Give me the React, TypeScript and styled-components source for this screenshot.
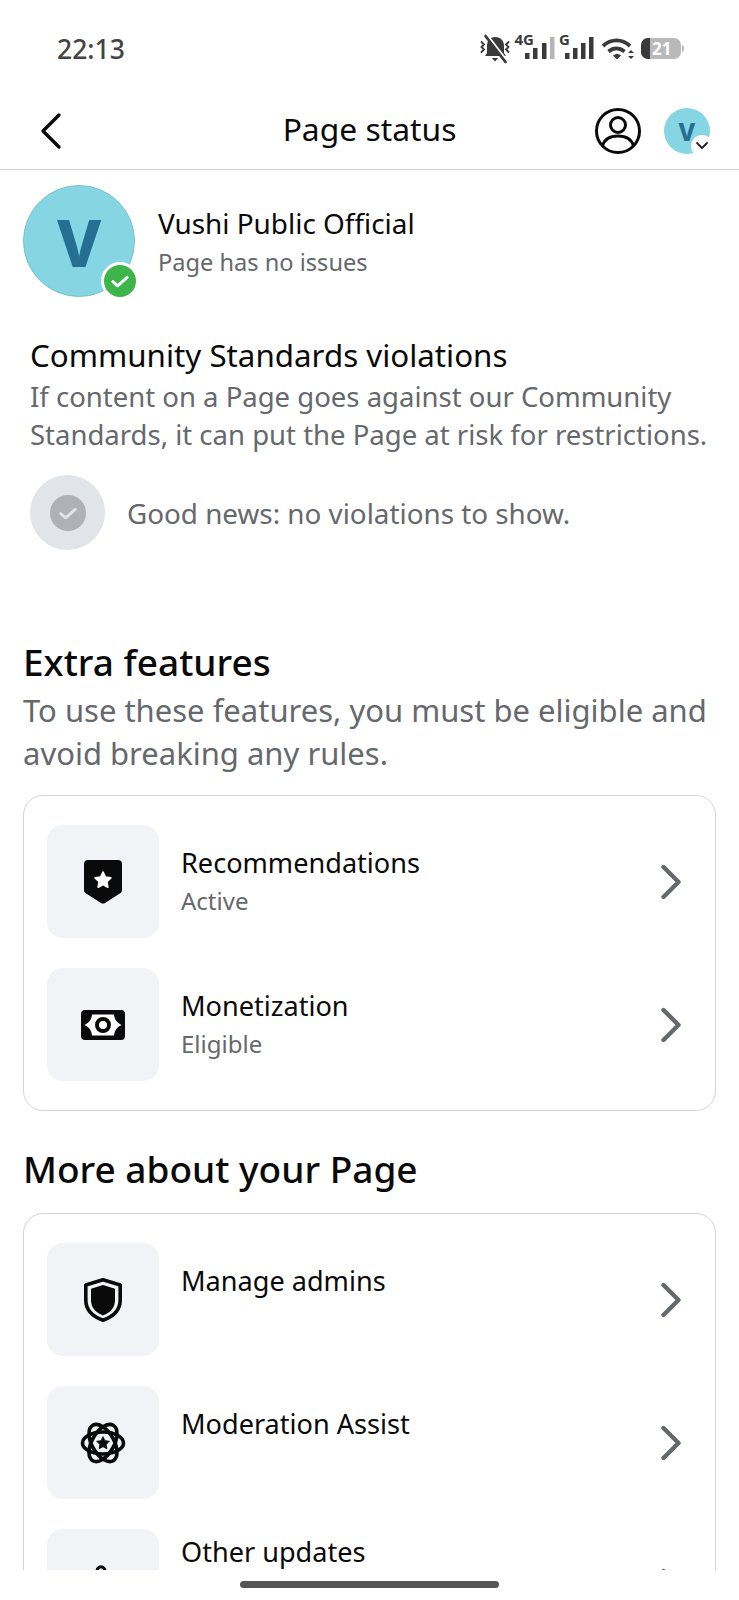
import React from "react";
import styled, { createGlobalStyle } from "styled-components";

const GlobalStyle = createGlobalStyle`
  html, body {
    margin: 0;
    padding: 0;
    background: #fff;
  }
  * {
    box-sizing: border-box;
  }
`;

const Page = styled.div`
  width: 739px;
  height: 1600px;
  display: flex;
  flex-direction: column;
  overflow: hidden;
  background: #fff;
  font-family: "Noto Sans", sans-serif;
  color: #0a0a0a;
`;

// ---------------------------------------------
// Status bar
// ---------------------------------------------
const StatusBar = styled.div`
  height: 92px;
  flex: none;
  display: flex;
  justify-content: space-between;
  align-items: flex-start;
  padding: 29px 49px 0 57px;
`;

const Clock = styled.span`
  font-size: 26.500px;
  line-height: 40px;
  font-weight: 500;
  color: #444;
`;

const StatusIcons = styled.svg`
  display: block;
  margin-top: -4px;
`;

const StatusText = styled.text`
  font-family: "Noto Sans", sans-serif;
  font-weight: 700;
  fill: #3a3a3a;
`;

const signalBars = (xs: number[], lastFill: string) => {
  const tops = [20, 15, 10, 4];
  return xs.map((x, i) => (
    <rect
      key={x}
      x={x}
      y={tops[i]}
      width="4.500"
      height={26 - tops[i]}
      fill={i === 3 ? lastFill : "#3a3a3a"}
    />
  ));
};

const StatusGroup = () => (
  <StatusIcons width="210" height="42" viewBox="0 -8 210 42">
    <g fill="none" stroke="#3a3a3a" strokeLinecap="round" strokeWidth="1.800">
      <path d="M1.500 9l2.500 2.500-2.500 2.500 2.500 2.500-2.500 2.500" />
      <path d="M28.500 9L26 11.500l2.500 2.500-2.500 2.500 2.500 2.500" />
    </g>
    <path d="M15 4c-5 0-8 4-8 9v7l-2 3h21l-2-3v-7c0-5-3-9-9-9z" fill="#3a3a3a" />
    <path d="M12 25h6l-3 3.500z" fill="#3a3a3a" />
    <path d="M7 2l20 26" stroke="#fff" strokeWidth="2.500" />
    <path d="M5.500 3l20 26" stroke="#3a3a3a" strokeWidth="2.800" strokeLinecap="round" />
    <StatusText x="34.500" y="12" fontSize="15">4G</StatusText>
    {signalBars([45, 53, 62, 70], "#b5b5b5")}
    <StatusText x="79" y="12" fontSize="15">G</StatusText>
    {signalBars([85, 93, 101, 109], "#3a3a3a")}
    <g fill="none" stroke="#3a3a3a" strokeWidth="3.800">
      <path d="M123 13c8-7.500 19-7.500 27 0" />
      <path d="M128.500 18.500c5-4 11-4 16 0" />
    </g>
    <path d="M133 22.500c3-2 5-2 8 0l-4 4z" fill="#3a3a3a" />
    <path d="M148 20l3-3 3 3zM148 23l3 3 3-3z" fill="#3a3a3a" />
    <rect x="161" y="5" width="40" height="21" rx="7" fill="#b9b9b9" />
    <path d="M168 5h2v21h-2a7 7 0 0 1-7-7v-7a7 7 0 0 1 7-7z" fill="#3a3a3a" />
    <path d="M202 12c1.500 0 2 2 2 3.500s-.5 3.500-2 3.500z" fill="#b9b9b9" />
    <StatusText x="172" y="22" fontSize="17" style={{ fill: "#fff" }}>21</StatusText>
  </StatusIcons>
);

// ---------------------------------------------
// Header
// ---------------------------------------------
const Header = styled.header`
  height: 78px;
  flex: none;
  display: flex;
  align-items: center;
  justify-content: space-between;
  padding: 0 29px 0 39px;
  border-bottom: 1px solid #d4d4d4;
  position: relative;
`;

const Title = styled.h1`
  position: absolute;
  left: 0;
  right: 0;
  top: 16px;
  margin: 0;
  text-align: center;
  font-size: 31.800px;
  line-height: 42px;
  font-weight: 400;
`;

const HeaderActions = styled.div`
  display: flex;
  align-items: center;
  gap: 23px;
`;

const MiniAvatar = styled.div`
  width: 46px;
  height: 46px;
  border-radius: 50%;
  background: #85d5e3;
  color: #266f92;
  font-size: 25px;
  font-weight: 800;
  display: flex;
  align-items: center;
  justify-content: center;
  position: relative;
`;

const MiniBadge = styled.div`
  position: absolute;
  right: -3px;
  bottom: -3px;
  width: 22px;
  height: 22px;
  border-radius: 50%;
  background: #fff;
  display: flex;
  align-items: center;
  justify-content: center;
`;

// ---------------------------------------------
// Scroll area
// ---------------------------------------------
const Content = styled.main`
  flex: 1;
  min-height: 0;
  overflow: hidden;
  padding: 15px 23px 0;
`;

const Profile = styled.section`
  display: flex;
  align-items: flex-start;
  gap: 23px;
`;

const AvatarWrap = styled.div`
  width: 112px;
  height: 112px;
  flex: none;
  position: relative;
`;

const Avatar = styled.div`
  width: 112px;
  height: 112px;
  border-radius: 50%;
  background: #85d5e3;
  border: 1px solid #78c3cf;
  color: #266f92;
  font-size: 66px;
  font-weight: 800;
  display: flex;
  align-items: center;
  justify-content: center;
`;

const CheckBadge = styled.div`
  position: absolute;
  right: -4px;
  bottom: -3px;
  width: 38px;
  height: 38px;
  border-radius: 50%;
  background: #3cb54a;
  border: 3px solid #fff;
  display: flex;
  align-items: center;
  justify-content: center;
`;

const ProfileText = styled.div`
  padding-top: 18px;
`;

const ProfileName = styled.div`
  font-size: 27.900px;
  line-height: 41px;
`;

const ProfileSub = styled.div`
  font-size: 23.600px;
  line-height: 36px;
  color: #65686c;
`;

const Standards = styled.section`
  margin-top: 36px;
  padding-left: 7px;
`;

const StandardsTitle = styled.h2`
  margin: 0;
  font-size: 31.300px;
  line-height: 45px;
  font-weight: 400;
`;

const StandardsText = styled.p`
  margin: 0;
  font-size: 27.500px;
  line-height: 38px;
  color: #65686c;
  white-space: nowrap;
`;

const GoodNews = styled.div`
  margin-top: 21px;
  display: flex;
  align-items: center;
  gap: 22px;
  font-size: 27.800px;
  color: #65686c;
`;

const GoodNewsOuter = styled.div`
  width: 75px;
  height: 75px;
  border-radius: 50%;
  background: #e1e4e8;
  display: flex;
  align-items: center;
  justify-content: center;
`;

const GoodNewsInner = styled.div`
  width: 36px;
  height: 36px;
  border-radius: 50%;
  background: #aeb1b5;
  display: flex;
  align-items: center;
  justify-content: center;
`;

const SectionTitle = styled.h2<{ $top: number }>`
  margin: ${(props) => props.$top}px 0 0;
  font-size: 37px;
  line-height: 48px;
  font-weight: 500;
`;

const SectionText = styled.p`
  margin: 3px 0 0;
  font-size: 31px;
  line-height: 43px;
  color: #65686c;
  white-space: nowrap;
`;

const Card = styled.div<{ $top: number }>`
  margin-top: ${(props) => props.$top}px;
  border: 1px solid #d4d4d4;
  border-radius: 20px;
  padding: 29px 23px;
  display: flex;
  flex-direction: column;
  gap: 30px;
`;

const Row = styled.div`
  display: flex;
  align-items: flex-start;
  gap: 22px;
`;

const Tile = styled.div`
  width: 112px;
  height: 113px;
  flex: none;
  border-radius: 16px;
  background: #f2f3f7;
  display: flex;
  align-items: center;
  justify-content: center;
`;

const RowText = styled.div<{ $top: number }>`
  flex: 1;
  padding-top: ${(props) => props.$top}px;
`;

const RowTitle = styled.div`
  font-size: 27.100px;
  line-height: 40px;
`;

const RowSub = styled.div`
  font-size: 24px;
  line-height: 36px;
  color: #65686c;
`;

const Chevron = styled.svg`
  align-self: center;
  flex: none;
  margin-right: 10px;
`;

const HomeArea = styled.div`
  height: 30px;
  flex: none;
  display: flex;
  justify-content: center;
  padding-top: 11px;
`;

const HomeBar = styled.div`
  width: 259px;
  height: 7px;
  border-radius: 4px;
  background: #555;
`;

// ---------------------------------------------
// Icons
// ---------------------------------------------
const Check = ({ size, color }: { size: number; color: string }) => (
  <svg width={size} height={size} viewBox="0 0 20 20" fill="none">
    <path d="M4 10.500l4 3.500 8-7" stroke={color} strokeWidth="2.400" strokeLinecap="round" strokeLinejoin="round" />
  </svg>
);

const RightChevron = () => (
  <Chevron width="22" height="36" viewBox="0 0 22 36" fill="none">
    <path d="M3.500 3L18.500 18 3.500 33" stroke="#65686c" strokeWidth="4.400" strokeLinecap="round" strokeLinejoin="round" />
  </Chevron>
);

const star = "M0-7.500l2.300 4.800 5.200.700-3.800 3.600.9 5.200L0 4.300l-4.600 2.500.9-5.200L-7.500-2l5.200-.700z";

const BadgeIcon = () => (
  <svg width="38" height="44" viewBox="0 0 38 44">
    <path d="M4 0h30a4 4 0 0 1 4 4v26c0 2-1 3-3 4l-14 9c-1.300.800-2.700.800-4 0L3 34c-2-1-3-2-3-4V4a4 4 0 0 1 4-4z" fill="#0a0a0a" />
    <path d={star} transform="translate(19 20) scale(1.050)" fill="#fff" strokeLinejoin="round" stroke="#fff" strokeWidth="1.600" />
  </svg>
);

const MoneyIcon = () => (
  <svg width="44" height="30" viewBox="0 0 44 30">
    <rect width="44" height="30" rx="4" fill="#0a0a0a" />
    <path d="M11 4.500H33Q33.500 12 40.500 15 33.500 18 33 25.500H11Q10.500 18 3.500 15 10.500 12 11 4.500z" fill="#fff" />
    <circle cx="22" cy="15" r="6" fill="none" stroke="#0a0a0a" strokeWidth="4" />
  </svg>
);

const ShieldIcon = () => (
  <svg width="38" height="44" viewBox="0 0 38 44">
    <path d="M19 1.800L36.200 7v15c0 11-8 17-17.200 20.200C9.800 39 1.800 33 1.800 22V7z" fill="none" stroke="#0a0a0a" strokeWidth="3.600" strokeLinejoin="round" />
    <path d="M19 7l12 3.800V22c0 8-5 12.500-12 15.500C12 34.500 7 30 7 22V10.800z" fill="#0a0a0a" />
  </svg>
);

const AtomIcon = () => (
  <svg width="46" height="44" viewBox="0 0 46 44" fill="none">
    <g stroke="#0a0a0a" strokeWidth="3.600" transform="translate(23 22)">
      <ellipse rx="20.500" ry="11" />
      <ellipse rx="20.500" ry="11" transform="rotate(60)" />
      <ellipse rx="20.500" ry="11" transform="rotate(120)" />
    </g>
    <path d={star} transform="translate(23 22) scale(.85)" fill="#0a0a0a" stroke="#0a0a0a" strokeLinejoin="round" />
  </svg>
);

const PinIcon = () => (
  <svg width="44" height="44" viewBox="0 0 44 44" fill="none">
    <path d="M16 8c0-7 8-7 8 0M15 8h15" stroke="#0a0a0a" strokeWidth="3.200" strokeLinecap="round" />
  </svg>
);

type RowData = { title: string; sub?: string; textTop?: number; icon: React.ReactNode };

const features: RowData[] = [
  { title: "Recommendations", sub: "Active", icon: <BadgeIcon /> },
  { title: "Monetization", sub: "Eligible", icon: <MoneyIcon /> },
];

const about: RowData[] = [
  { title: "Manage admins", icon: <ShieldIcon /> },
  { title: "Moderation Assist", icon: <AtomIcon /> },
  { title: "Other updates", textTop: 3, icon: <PinIcon /> },
];

const FeatureRow = ({ title, sub, textTop = 18, icon }: RowData) => (
  <Row>
    <Tile>{icon}</Tile>
    <RowText $top={textTop}>
      <RowTitle>{title}</RowTitle>
      {sub && <RowSub>{sub}</RowSub>}
    </RowText>
    <RightChevron />
  </Row>
);

export default function App() {
  return (
    <Page>
      <GlobalStyle />
      <StatusBar>
        <Clock>22:13</Clock>
        <StatusGroup />
      </StatusBar>
      <Header>
        <svg width="24" height="38" viewBox="0 0 24 38" fill="none">
          <path d="M20 3L4 19l16 16" stroke="#0a0a0a" strokeWidth="3.400" strokeLinecap="round" strokeLinejoin="round" />
        </svg>
        <Title>Page status</Title>
        <HeaderActions>
          <svg width="46" height="46" viewBox="0 0 46 46" fill="none" stroke="#0a0a0a" strokeWidth="3">
            <circle cx="23" cy="23" r="21.500" />
            <circle cx="23" cy="17" r="7.500" />
            <path d="M7.500 38c2-7 8-10 15.500-10s13.500 3 15.500 10" />
          </svg>
          <MiniAvatar>
            V
            <MiniBadge>
              <svg width="14" height="10" viewBox="0 0 14 10" fill="none">
                <path d="M2 2l5 5 5-5" stroke="#222" strokeWidth="1.800" strokeLinecap="round" strokeLinejoin="round" />
              </svg>
            </MiniBadge>
          </MiniAvatar>
        </HeaderActions>
      </Header>
      <Content>
        <Profile>
          <AvatarWrap>
            <Avatar>V</Avatar>
            <CheckBadge>
              <Check size={24} color="#fff" />
            </CheckBadge>
          </AvatarWrap>
          <ProfileText>
            <ProfileName>Vushi Public Official</ProfileName>
            <ProfileSub>Page has no issues</ProfileSub>
          </ProfileText>
        </Profile>

        <Standards>
          <StandardsTitle>Community Standards violations</StandardsTitle>
          <StandardsText>
            If content on a Page goes against our Community
            <br />
            Standards, it can put the Page at risk for restrictions.
          </StandardsText>
          <GoodNews>
            <GoodNewsOuter>
              <GoodNewsInner>
                <Check size={24} color="#e1e4e8" />
              </GoodNewsInner>
            </GoodNewsOuter>
            Good news: no violations to show.
          </GoodNews>
        </Standards>

        <SectionTitle $top={88}>Extra features</SectionTitle>
        <SectionText>
          To use these features, you must be eligible and
          <br />
          avoid breaking any rules.
        </SectionText>
        <Card $top={20}>
          {features.map((row) => (
            <FeatureRow key={row.title} {...row} />
          ))}
        </Card>

        <SectionTitle $top={34}>More about your Page</SectionTitle>
        <Card $top={20}>
          {about.map((row) => (
            <FeatureRow key={row.title} {...row} />
          ))}
        </Card>
      </Content>
      <HomeArea>
        <HomeBar />
      </HomeArea>
    </Page>
  );
}
